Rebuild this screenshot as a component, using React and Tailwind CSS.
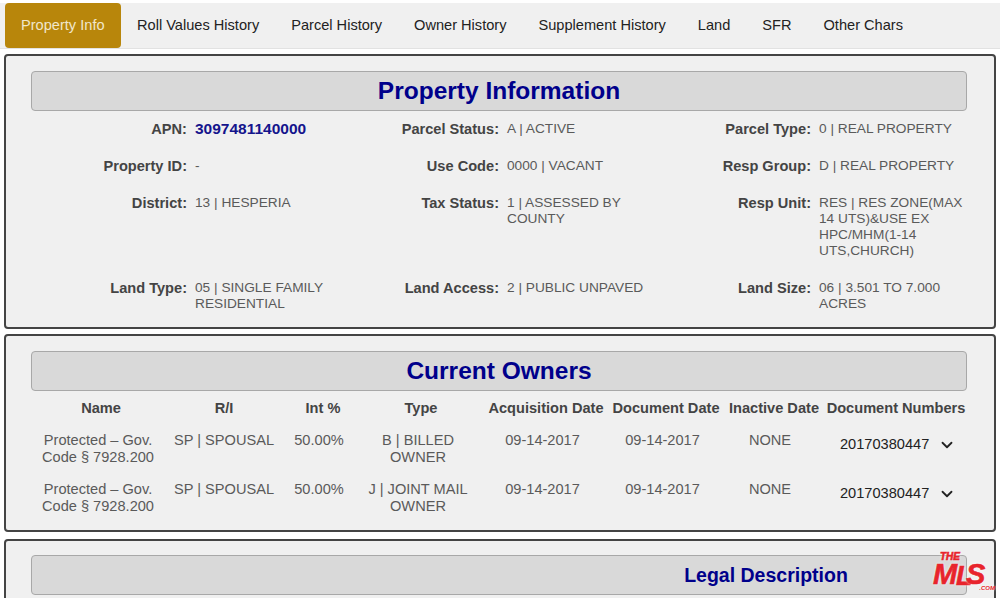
import React from "react";
import { ChevronDown } from "lucide-react";

const tabs = ["Property Info", "Roll Values History", "Parcel History", "Owner History", "Supplement History", "Land", "SFR", "Other Chars"];

const fields = [
  ["APN:", "3097481140000"],
  ["Parcel Status:", "A | ACTIVE"],
  ["Parcel Type:", "0 | REAL PROPERTY"],
  ["Property ID:", "-"],
  ["Use Code:", "0000 | VACANT"],
  ["Resp Group:", "D | REAL PROPERTY"],
  ["District:", "13 | HESPERIA"],
  ["Tax Status:", "1 | ASSESSED BY COUNTY"],
  ["Resp Unit:", "RES | RES ZONE(MAX 14 UTS)&USE EX HPC/MHM(1-14 UTS,CHURCH)"],
  ["Land Type:", "05 | SINGLE FAMILY RESIDENTIAL"],
  ["Land Access:", "2 | PUBLIC UNPAVED"],
  ["Land Size:", "06 | 3.501 TO 7.000 ACRES"],
];

const owners = [
  { type: "B | BILLED OWNER" },
  { type: "J | JOINT MAIL OWNER" },
];

const Field = ({ label, value }) => (
  <div className="flex gap-2">
    <div className="w-[156px] shrink-0 text-right text-[14.6px] font-bold text-[#444]">{label}</div>
    {label === "APN:" ? (
      <div className="text-[15.5px] leading-[16px] font-bold text-[#14148c]">{value}</div>
    ) : (
      <div className="w-[150px] text-[13.7px] text-[#5a5a5a]">{value}</div>
    )}
  </div>
);

const TitleBar = ({ children }) => (
  <div className="h-[40px] flex items-center justify-center rounded border border-[#a8a8a8] bg-[#d9d9d9] text-[24.5px] font-bold text-[#00008b]">
    {children}
  </div>
);

const Logo = () => (
  <div className="absolute right-[-29px] top-[-5px] w-[62px] h-[42px] text-[#e8242c] font-bold italic leading-none [text-shadow:0_0_3px_#fff] [-webkit-text-stroke:0.6px_#e8242c]">
    <span className="absolute left-[7px] top-[1px] text-[10px]">THE</span>
    <span className="absolute left-0 top-[9px] text-[29px] tracking-[-1px]">M</span>
    <span className="absolute left-[23px] top-[12px] text-[27px]">L</span>
    <span className="absolute left-[33px] top-[9px] text-[29px]">S</span>
    <span className="absolute right-0 bottom-[2px] text-[6px] [-webkit-text-stroke:0px]">.COM</span>
  </div>
);

export default function App() {
  return (
    <div className="w-[1000px] h-[598px] overflow-hidden bg-white pt-[3px] font-['Liberation_Sans',Arial,sans-serif] text-sm leading-[16.25px]">
      <div className="flex h-[46px] bg-[#f0f0f0] pl-[5px] border-b border-[#e2e2e2]">
        {tabs.map((t, i) => (
          <div
            key={t}
            className={
              i === 0
                ? "flex items-center pl-4 w-[116px] h-[45px] rounded bg-[#b8860b] text-[#f0e6cc] text-[14.6px]"
                : "flex items-center px-4 h-[45px] text-[#222] text-[14.6px]"
            }
          >
            {t}
          </div>
        ))}
      </div>

      <div className="mt-[5px] ml-[4px] w-[992px] h-[275px] rounded border-2 border-[#444] bg-[#f0f0f0] pt-[15px] pl-[25px] pr-[27px]">
        <TitleBar>Property Information</TitleBar>
        <div className="grid grid-cols-[312px_312px_312px] gap-y-[20.5px] mt-[10px]">
          {fields.map((f) => (
            <Field key={f[0]} label={f[0]} value={f[1]} />
          ))}
        </div>
      </div>

      <div className="mt-[5px] ml-[4px] w-[992px] h-[198px] rounded border-2 border-[#444] bg-[#f0f0f0] pt-[15px] pl-[25px] pr-[27px]">
        <TitleBar>Current Owners</TitleBar>
        <div className="grid grid-cols-[140px_106px_92px_114px_126px_114px_102px_142px] text-center text-[14.6px] leading-[17px] font-bold text-[#444] mt-[9px]">
          <div>Name</div>
          <div>R/I</div>
          <div>Int %</div>
          <div className="pr-[10px]">Type</div>
          <div>Acquisition Date</div>
          <div>Document Date</div>
          <div>Inactive Date</div>
          <div>Document Numbers</div>
        </div>
        {owners.map((o) => (
          <div
            key={o.type}
            className="grid grid-cols-[140px_106px_92px_114px_126px_114px_102px_142px] text-center text-[14.6px] leading-[17px] text-[#5a5a5a] mt-[15px] h-[34px]"
          >
            <div className="pr-[6px]">Protected – Gov. Code § 7928.200</div>
            <div>SP | SPOUSAL</div>
            <div className="pr-2">50.00%</div>
            <div className="-ml-1 pr-3">{o.type}</div>
            <div className="pr-[7px]">09-14-2017</div>
            <div className="pr-[7px]">09-14-2017</div>
            <div className="pr-2">NONE</div>
            <div className="flex items-center pl-[15px] gap-[9px] h-[17px] mt-[4px] text-[#222]">
              <span>20170380447</span>
              <ChevronDown size={18} strokeWidth={2.4} className="shrink-0 text-[#222]" />
            </div>
          </div>
        ))}
      </div>

      <div className="mt-[7px] ml-[4px] w-[992px] h-[80px] rounded border-2 border-[#444] bg-[#f0f0f0] pt-[14px] pl-[25px] pr-[27px]">
        <div className="relative h-[40px] flex items-center justify-center rounded border border-[#a8a8a8] bg-[#d9d9d9] pl-[534px] text-[19.5px] font-bold text-[#00008b]">
          Legal Description
          <Logo />
        </div>
      </div>
    </div>
  );
}
